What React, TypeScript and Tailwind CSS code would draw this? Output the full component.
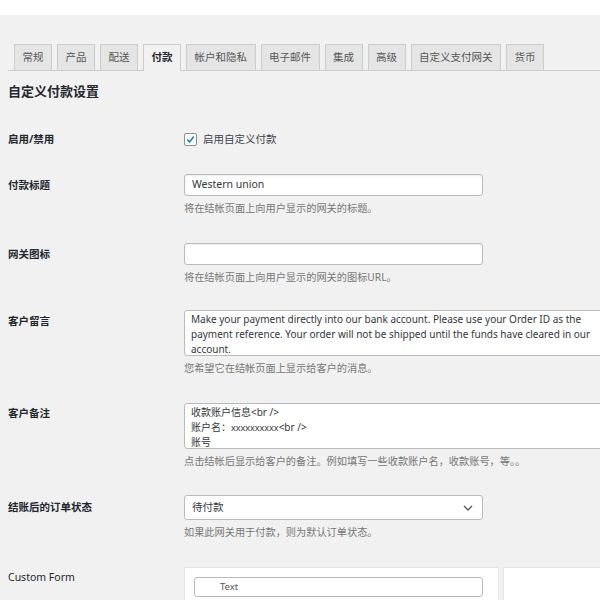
const font = { fontFamily: '"Noto Sans", "Noto Sans CJK SC", sans-serif' };

const tabs = ['常规', '产品', '配送', '付款', '帐户和隐私', '电子邮件', '集成', '高级', '自定义支付网关', '货币'];

function Desc({ children }: { children: React.ReactNode }) {
  return <p className="mt-[5px] h-[14px] whitespace-nowrap text-[10.2px] leading-[14px] text-[#777]">{children}</p>;
}

function Label({ children, pt = 'pt-px' }: { children: React.ReactNode; pt?: string }) {
  return (
    <div className={`w-[176px] shrink-0 text-[10.5px] font-bold leading-[20px] text-[#23282d] ${pt}`}>{children}</div>
  );
}

export default function App() {
  return (
    <div className="h-[600px] w-[600px] overflow-hidden bg-[#f1f1f1]" style={font}>
      <div className="h-[15px] bg-white" />

      <div className="pl-2 pt-[29px]">
        {/* tabs */}
        <div className="flex h-[27px] gap-[5px] border-b border-[#ccc] pl-[6px]">
          {tabs.map((t) => (
            <div
              key={t}
              className={
                t === '付款'
                  ? 'flex h-[27px] items-center border border-b-0 border-[#ccc] bg-[#f1f1f1] px-[7.5px] text-[10.5px] font-bold text-[#23282d]'
                  : 'flex h-[26px] items-center border border-b-0 border-[#ccc] bg-[#e5e5e5] px-[7.5px] text-[10.5px] text-[#555]'
              }
            >
              {t}
            </div>
          ))}
        </div>

        <h2 className="mt-[10px] h-[20px] text-[13px] font-bold leading-[20px] text-[#23282d]">自定义付款设置</h2>

        <div className="mt-[32px] flex flex-col">
          {/* enable */}
          <div className="flex h-[13px] items-center">
            <div className="w-[176px] shrink-0 text-[10.5px] font-bold text-[#23282d]">启用/禁用</div>
            <div className="flex items-center gap-[6px]">
              <span className="flex h-[13px] w-[13px] items-center justify-center rounded-[2px] border border-[#8c8f94] bg-white">
                <svg width="11" height="11" viewBox="0 0 12 12">
                  <path d="M2.5 6.2 L5 8.7 L9.6 2.8" fill="none" stroke="#1e8cbe" strokeWidth="1.9" />
                </svg>
              </span>
              <span className="text-[10.5px] text-[#3c434a]">启用自定义付款</span>
            </div>
          </div>

          {/* title */}
          <div className="mt-[28px] flex items-start">
            <Label>付款标题</Label>
            <div>
              <div className="flex h-[22px] w-[299px] items-center rounded-[3px] border border-[#bbb] bg-white px-[7px] text-[10.5px] text-[#32373c] shadow-[inset_0_1px_2px_rgba(0,0,0,0.07)]">
                Western union
              </div>
              <Desc>将在结帐页面上向用户显示的网关的标题。</Desc>
            </div>
          </div>

          {/* icon */}
          <div className="mt-[28px] flex items-start">
            <Label>网关图标</Label>
            <div>
              <div className="h-[22px] w-[299px] rounded-[3px] border border-[#bbb] bg-white shadow-[inset_0_1px_2px_rgba(0,0,0,0.07)]" />
              <Desc>将在结帐页面上向用户显示的网关的图标URL。</Desc>
            </div>
          </div>

          {/* message */}
          <div className="mt-[26px] flex items-start">
            <Label>客户留言</Label>
            <div>
              <div className="h-[46px] w-[440px] overflow-hidden rounded-[3px] border border-[#bbb] bg-white px-[6px] pt-px text-[10px] leading-[15px] text-[#32373c]">
                Make your payment directly into our bank account. Please use your Order ID as the payment reference. Your order will not be shipped until the funds have cleared in our account.
              </div>
              <Desc>您希望它在结帐页面上显示给客户的消息。</Desc>
            </div>
          </div>

          {/* note */}
          <div className="mt-[28px] flex items-start">
            <Label pt="pt-0">客户备注</Label>
            <div>
              <div className="h-[46px] w-[440px] overflow-hidden rounded-[3px] border border-[#bbb] bg-white px-[6px] pt-px text-[10px] leading-[15px] text-[#32373c]">
                <div className="h-[15px]">收款账户信息&lt;br /&gt;</div>
                <div className="h-[15px]">
                  账户名：<span className="text-[9px]">xxxxxxxxxx</span>&lt;br /&gt;
                </div>
                <div className="h-[15px]">账号</div>
              </div>
              <Desc>点击结帐后显示给客户的备注。例如填写一些收款账户名，收款账号，等。。</Desc>
            </div>
          </div>

          {/* status */}
          <div className="mt-[27px] flex items-start">
            <Label pt="pt-[2px]">结账后的订单状态</Label>
            <div>
              <div className="flex h-[25px] w-[299px] items-center justify-between rounded-[3px] border border-[#bbb] bg-white pl-[7px] pr-[9px] text-[10.5px] text-[#32373c]">
                <span>待付款</span>
                <svg width="10" height="6" viewBox="0 0 10 6">
                  <path d="M1 1 L5 5 L9 1" fill="none" stroke="#555" strokeWidth="1.3" />
                </svg>
              </div>
              <Desc>如果此网关用于付款，则为默认订单状态。</Desc>
            </div>
          </div>

          {/* custom form */}
          <div className="mt-[28px] flex items-start">
            <div className="w-[176px] shrink-0 text-[10.5px] leading-[20px] text-[#23282d]">Custom Form</div>
            <div className="flex gap-[4px]">
              <div className="h-[60px] w-[315px] border border-[#e5e5e5] bg-white px-[9px] pt-[9px]">
                <div className="flex h-[20px] w-[289px] items-center rounded-[3px] border border-[#bbb] bg-white pl-[25px] text-[9.5px] text-[#555]">
                  Text
                </div>
              </div>
              <div className="h-[60px] w-[120px] border border-[#e5e5e5] bg-white" />
            </div>
          </div>
        </div>
      </div>
    </div>
  );
}
